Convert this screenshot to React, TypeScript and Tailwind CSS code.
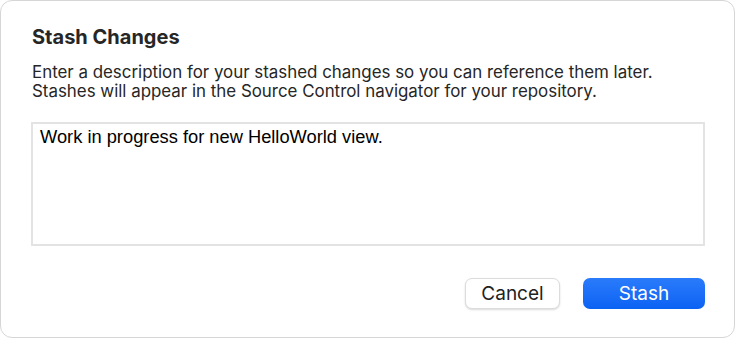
export default function App() {
  return (
    <div className="w-[735px] h-[338px] bg-white">
      <div className="w-[735px] h-[338px] rounded-[12px] border border-[#d6d6d6] bg-white flex flex-col pl-[30px] pr-[29px] pt-[24px] font-['Inter',sans-serif] text-[#262626]">
        <h1 className="text-[20px] leading-[24px] font-bold pl-px">Stash Changes</h1>
        <p className="mt-[14px] text-[16.9px] leading-[19px] pl-px">
          Enter a description for your stashed changes so you can reference them later.
          <br />
          Stashes will appear in the Source Control navigator for your repository.
        </p>
        <div className="mt-[21px] h-[124px] border-2 border-[#e3e3e3] px-[7px] pt-[2px] font-['Liberation_Sans',sans-serif] text-[18.3px] leading-[22px] text-black">
          Work in progress for new HelloWorld view.
        </div>
        <div className="mt-[32px] flex justify-end gap-[23px]">
          <button className="w-[95px] h-[31px] rounded-[7px] bg-white border border-[#dcdcdc] shadow-[0_1px_2px_rgba(0,0,0,0.15)] text-[19px] leading-[20px] text-[#222]">
            Cancel
          </button>
          <button className="w-[122px] h-[31px] rounded-[7px] bg-gradient-to-b from-[#2a7bfb] to-[#0a62f3] text-[19px] leading-[20px] text-white">
            Stash
          </button>
        </div>
      </div>
    </div>
  );
}
